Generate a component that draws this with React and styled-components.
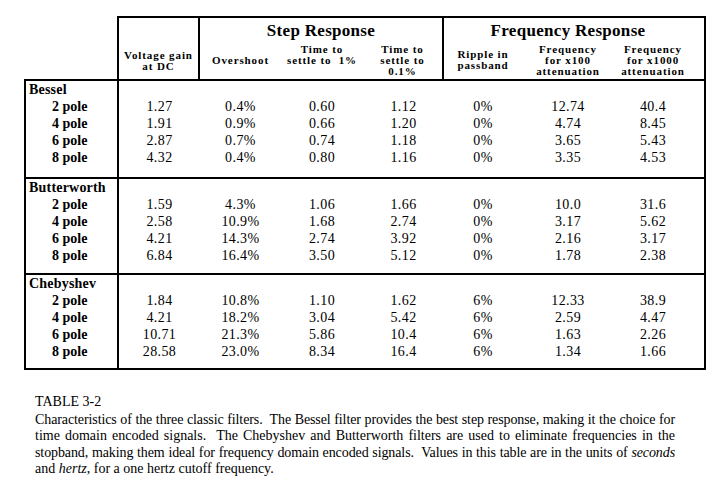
import React from "react";
import styled, { createGlobalStyle } from "styled-components";

const GlobalStyle = createGlobalStyle`
  html, body {
    margin: 0;
    padding: 0;
    background: #ffffff;
    color: #000000;
    font-family: "Liberation Serif", "Times New Roman", serif;
  }
`;

const Page = styled.div`
  width: 727px;
  height: 480px;
  padding: 16px 0 0 24px;
  box-sizing: border-box;
  overflow: hidden;
`;

const Table = styled.div`
  width: 682px;
`;

const HeaderRow = styled.div`
  display: flex;
`;

const Corner = styled.div`
  width: 93px;
  flex: none;
`;

const HeaderBox = styled.div`
  display: flex;
  border: 2px solid #000;
  border-bottom: none;
  height: 61px;
`;

const HeadSection = styled.div`
  display: flex;
  flex-direction: column;
  width: ${(p) => p.$w}px;
  box-sizing: border-box;
  border-right: ${(p) => (p.$last ? "none" : "2px solid #000")};
  padding-right: ${(p) => (p.$last ? 12 : 0)}px;
`;

const Title = styled.div`
  height: 25px;
  line-height: 25px;
  text-align: center;
  font-weight: bold;
  font-size: 17px;
  letter-spacing: 0.3px;
`;

const SubRow = styled.div`
  flex: 1;
  display: grid;
  grid-template-columns: ${(p) => p.$cols};
  padding-bottom: 2px;
`;

const SubHead = styled.div`
  display: flex;
  flex-direction: column;
  justify-content: center;
  align-items: center;
  text-align: center;
  font-weight: bold;
  font-size: 11px;
  line-height: 11px;
  letter-spacing: 0.9px;
  padding-top: ${(p) => p.$top || 0}px;
  padding-bottom: ${(p) => p.$lift || 0}px;
`;

const Group = styled.div`
  display: flex;
  border: 2px solid #000;
  border-top: ${(p) => (p.$first ? "2px solid #000" : "none")};
`;

const LabelCol = styled.div`
  width: 93px;
  flex: none;
  box-sizing: border-box;
  border-right: 2px solid #000;
  padding: 1px 0 ${(p) => p.$pb}px 3px;
  font-weight: bold;
  font-size: 14px;
`;

const GroupName = styled.div`
  line-height: 16px;
  letter-spacing: 0.2px;
`;

const Pole = styled.div`
  line-height: 17px;
  padding-left: 23px;
`;

const DataGrid = styled.div`
  display: grid;
  grid-template-columns: 81px 81px 82px 81px 78px 92px 78px;
  grid-auto-rows: 17px;
  align-content: start;
  padding-top: 17px;
  font-size: 14px;
  letter-spacing: 0.4px;
`;

const Cell = styled.div`
  text-align: center;
  line-height: 17px;
`;

const Caption = styled.div`
  margin: 24px 0 0 11px;
  width: 640px;
  font-size: 14px;
  line-height: 16.5px;
`;

const CaptionTitle = styled.div`
  margin-bottom: 1px;
`;

const CaptionLine = styled.div`
  white-space: nowrap;
  text-align: justify;
  text-align-last: ${(p) => (p.$last ? "left" : "justify")};
  letter-spacing: ${(p) => p.$ls || 0}px;
`;

const groups = [
  {
    name: "Bessel",
    pb: 11,
    rows: [
      ["2 pole", "1.27", "0.4%", "0.60", "1.12", "0%", "12.74", "40.4"],
      ["4 pole", "1.91", "0.9%", "0.66", "1.20", "0%", "4.74", "8.45"],
      ["6 pole", "2.87", "0.7%", "0.74", "1.18", "0%", "3.65", "5.43"],
      ["8 pole", "4.32", "0.4%", "0.80", "1.16", "0%", "3.35", "4.53"],
    ],
  },
  {
    name: "Butterworth",
    pb: 9,
    rows: [
      ["2 pole", "1.59", "4.3%", "1.06", "1.66", "0%", "10.0", "31.6"],
      ["4 pole", "2.58", "10.9%", "1.68", "2.74", "0%", "3.17", "5.62"],
      ["6 pole", "4.21", "14.3%", "2.74", "3.92", "0%", "2.16", "3.17"],
      ["8 pole", "6.84", "16.4%", "3.50", "5.12", "0%", "1.78", "2.38"],
    ],
  },
  {
    name: "Chebyshev",
    pb: 8,
    rows: [
      ["2 pole", "1.84", "10.8%", "1.10", "1.62", "6%", "12.33", "38.9"],
      ["4 pole", "4.21", "18.2%", "3.04", "5.42", "6%", "2.59", "4.47"],
      ["6 pole", "10.71", "21.3%", "5.86", "10.4", "6%", "1.63", "2.26"],
      ["8 pole", "28.58", "23.0%", "8.34", "16.4", "6%", "1.34", "1.66"],
    ],
  },
];

export default function App() {
  return (
    <Page>
      <GlobalStyle />
      <Table>
        <HeaderRow>
          <Corner />
          <HeaderBox>
            <HeadSection $w={81}>
              <SubHead $top={25} style={{ flex: 1 }}>
                <div>Voltage gain</div>
                <div>at DC</div>
              </SubHead>
            </HeadSection>
            <HeadSection $w={244}>
              <Title>Step Response</Title>
              <SubRow $cols="81px 82px 79px">
                <SubHead>Overshoot</SubHead>
                <SubHead $lift={11}>
                  <div>Time to</div>
                  <div>settle to&nbsp; 1%</div>
                </SubHead>
                <SubHead>
                  <div>Time to</div>
                  <div>settle to</div>
                  <div>0.1%</div>
                </SubHead>
              </SubRow>
            </HeadSection>
            <HeadSection $w={260} $last>
              <Title>Frequency Response</Title>
              <SubRow $cols="78px 92px 78px">
                <SubHead>
                  <div>Ripple in</div>
                  <div>passband</div>
                </SubHead>
                <SubHead>
                  <div>Frequency</div>
                  <div>for x100</div>
                  <div>attenuation</div>
                </SubHead>
                <SubHead>
                  <div>Frequency</div>
                  <div>for x1000</div>
                  <div>attenuation</div>
                </SubHead>
              </SubRow>
            </HeadSection>
          </HeaderBox>
        </HeaderRow>

        {groups.map((g, gi) => (
          <Group key={g.name} $first={gi === 0}>
            <LabelCol $pb={g.pb}>
              <GroupName>{g.name}</GroupName>
              {g.rows.map((r) => (
                <Pole key={r[0]}>{r[0]}</Pole>
              ))}
            </LabelCol>
            <DataGrid>
              {g.rows.map((r) =>
                r.slice(1).map((v, i) => <Cell key={r[0] + i}>{v}</Cell>)
              )}
            </DataGrid>
          </Group>
        ))}
      </Table>

      <Caption>
        <CaptionTitle>TABLE 3-2</CaptionTitle>
        <CaptionLine $ls={-0.1}>
          Characteristics of the three classic filters.&nbsp; The Bessel filter provides the best step
          response, making it the choice for
        </CaptionLine>
        <CaptionLine>
          time domain encoded signals.&nbsp; The Chebyshev and Butterworth filters are used to eliminate
          frequencies in the
        </CaptionLine>
        <CaptionLine $ls={-0.1}>
          stopband, making them ideal for frequency domain encoded signals.&nbsp; Values in this table are
          in the units of <i>seconds</i>
        </CaptionLine>
        <CaptionLine $last>
          and <i>hertz</i>, for a one hertz cutoff frequency.
        </CaptionLine>
      </Caption>
    </Page>
  );
}
